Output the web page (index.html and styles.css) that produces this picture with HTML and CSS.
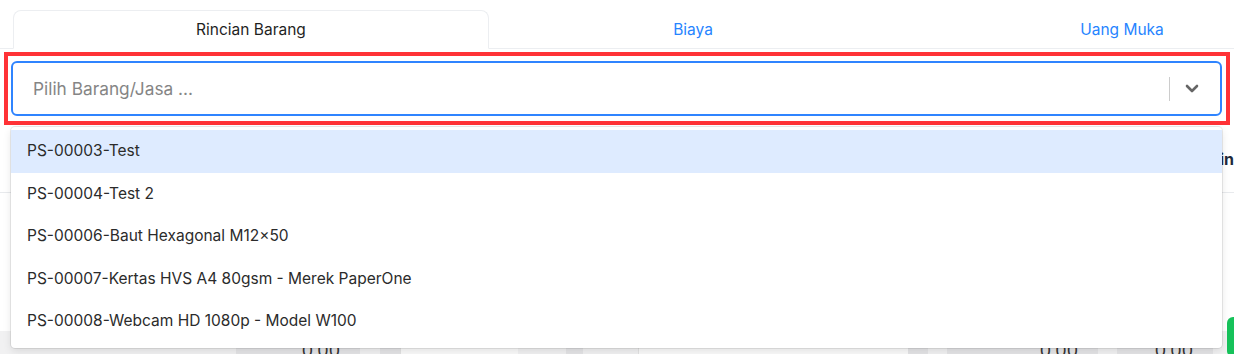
FILE: index.html
```html
<!DOCTYPE html>
<html lang="id">
<head>
  <meta charset="UTF-8">
  <meta name="viewport" content="width=device-width, initial-scale=1.0">
  <title>Rincian Barang</title>
  <link rel="stylesheet" href="styles.css">
</head>
<body>
  <nav class="tabs">
    <div class="tab active">Rincian Barang</div>
    <div class="tab tab-biaya">Biaya</div>
    <div class="tab tab-uang">Uang Muka</div>
  </nav>

  <div class="select-wrap">
    <div class="select-control">
      <div class="select-placeholder">Pilih Barang/Jasa ...</div>
      <span class="select-sep"></span>
      <div class="select-arrow">
        <svg width="14" height="9" viewBox="0 0 14 9"><path d="M2 2l5 5 5-5" fill="none" stroke="#666" stroke-width="2.6" stroke-linecap="round" stroke-linejoin="round"/></svg>
      </div>
    </div>
    <!-- open menu -->
    <div class="select-menu">
      <div class="option focused">PS-00003-Test</div>
      <div class="option">PS-00004-Test 2</div>
      <div class="option">PS-00006-Baut Hexagonal M12×50</div>
      <div class="option">PS-00007-Kertas HVS A4 80gsm - Merek PaperOne</div>
      <div class="option">PS-00008-Webcam HD 1080p - Model W100</div>
    </div>
  </div>

  <section class="items">
    <div class="items-head">
      <span class="head-label">Margin</span>
    </div>
    <div class="items-row">
      <div class="cell c-light" style="width:236px"></div>
      <div class="cell c-gray num" style="width:124px">0.00</div>
      <div class="cell c-light" style="width:20px"></div>
      <div class="cell c-gray" style="width:20px"></div>
      <div class="cell c-white" style="width:118px"></div>
      <div class="cell c-light" style="width:48px"></div>
      <div class="cell c-gray" style="width:17px"></div>
      <div class="cell c-light" style="width:55px"></div>
      <div class="cell c-white" style="width:270px"></div>
      <div class="cell c-gray" style="width:20px"></div>
      <div class="cell c-light" style="width:19px"></div>
      <div class="cell c-gray num" style="width:151px">0.00</div>
      <div class="cell c-light" style="width:19px"></div>
      <div class="cell c-gray num" style="width:96px">0.00</div>
      <div class="cell c-light" style="width:14px"></div>
      <div class="cell c-green"></div>
    </div>
  </section>
</body>
</html>
```

FILE: styles.css
```css
* { box-sizing: border-box; }
html, body {
  height: 354px;
  overflow: hidden;
}
body {
  margin: 0;
  font-family: Inter, 'Noto Sans', Arial, sans-serif;
  background: #fff;
  color: #222;
}
/* Tabs */
.tabs {
  display: flex;
  margin-top: 10px;
  padding-left: 13px;
  height: 39px;
  border-bottom: 1px solid #eceef1;
}
.tab {
  height: 39px;
  display: flex;
  align-items: center;
  justify-content: center;
  font-size: 15.5px;
  color: #2684ff;
  flex-shrink: 0;
}
.tab.active {
  width: 476px;
  color: #1f1f1f;
  background: #fff;
  border: 1px solid #eceef1;
  border-bottom-color: #fff;
  border-radius: 8px 8px 0 0;
}
.tab-biaya { width: 408px; }
.tab-uang { width: 450px; }
/* Select */
.select-wrap {
  position: relative;
  z-index: 5;
  margin: 3px 4px 0 4px;
  border: 4px solid #ff3236;
  padding: 5px 4px 5px 3px;
}
.select-control {
  height: 55px;
  display: flex;
  align-items: center;
  border: 2px solid #2f84ff;
  border-radius: 6px;
  background: #fff;
  padding-right: 6px;
}
.select-placeholder {
  flex: 1;
  padding-left: 20px;
  font-size: 17.3px;
  color: #858585;
}
.select-sep {
  width: 1px;
  height: 24px;
  background: #cccccc;
}
.select-arrow {
  width: 44px;
  display: flex;
  justify-content: center;
  align-items: center;
}
.select-arrow svg { display: block; }
.select-menu {
  position: absolute;
  top: calc(100% + 6px);
  left: 3px;
  width: 1211px;
  background: #fff;
  border-radius: 4px;
  padding: 3px 0 5px;
  box-shadow: 0 0 0 1px rgba(0,0,0,0.08), 0 3px 8px rgba(0,0,0,0.1);
}
.option {
  padding: 12px 16px;
  line-height: 18.5px;
  font-size: 15.5px;
  color: #2b2b2b;
}
.option.focused { background: #deebff; }
/* Items table behind the menu */
.items-head {
  height: 68px;
  display: flex;
  align-items: center;
  justify-content: flex-end;
  border-bottom: 1px solid #e8eaed;
  white-space: nowrap;
}
.head-label {
  font-size: 16px;
  font-weight: 700;
  color: #1e293b;
}
.items-row {
  display: flex;
  margin-top: 138px;
  height: 40px;
  white-space: nowrap;
}
.cell {
  flex-shrink: 0;
  height: 40px;
}
.c-light { background: #f1f1f2; }
.c-gray { background: #e4e4e6; }
.c-white { background: #fafafa; border-left: 1px solid #e2e2e2; }
.c-green {
  width: 30px;
  background: #16c25a;
  border-radius: 6px;
  margin-top: -14px;
}
.num {
  text-align: right;
  font-size: 18px;
  padding: 9px 20px 0 0;
  color: #333;
}
```
